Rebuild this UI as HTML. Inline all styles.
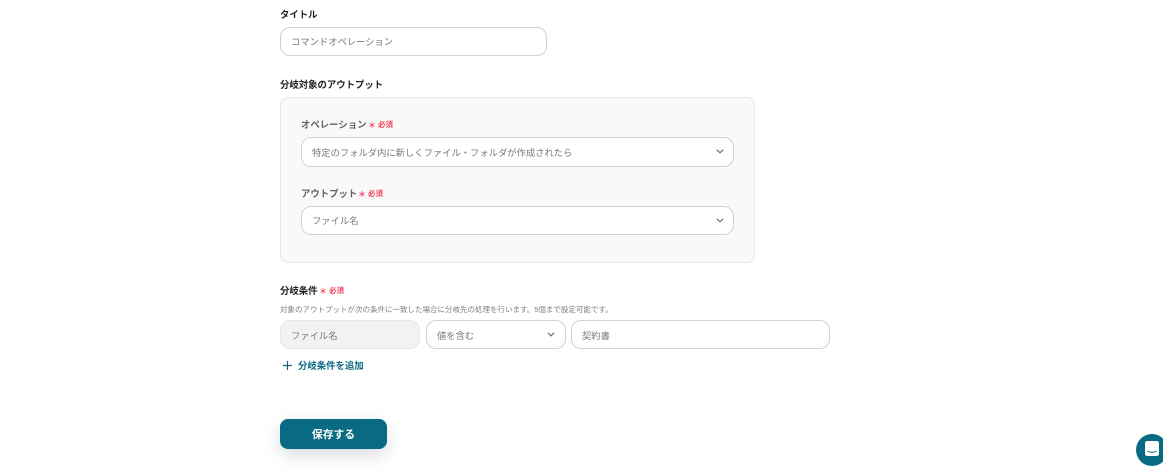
<!DOCTYPE html>
<html lang="ja">
<head>
<meta charset="utf-8">
<style>
html,body{margin:0;padding:0;width:1163px;height:473px;overflow:hidden;background:#fff;}
body{position:relative;font-family:"Liberation Sans","Noto Sans CJK JP",sans-serif;}
.a{position:absolute;box-sizing:border-box;white-space:nowrap;}
.lbl{font-size:9.4px;font-weight:700;line-height:14px;color:#27292d;}
.lbl2{color:#5f6368;}
.req{font-size:7.5px;font-weight:700;line-height:12px;color:#f5405c;}
.ast{font-size:8px;font-weight:700;line-height:12px;color:#f5405c;}
.box{background:#fff;border:1px solid #ccd2d9;border-radius:10px;font-size:9.3px;color:#74787d;padding-left:10px;}
svg.ch{position:absolute;width:8px;height:5px;}
</style>
</head>
<body>
<div class="a lbl" style="left:280px;top:8px;color:#1f2124">タイトル</div>
<div class="a box" style="left:280px;top:27px;width:267px;height:29px;line-height:29px;">コマンドオペレーション</div>

<div class="a lbl" style="left:280px;top:78px;color:#1f2124">分岐対象のアウトプット</div>
<div class="a" style="left:280px;top:97px;width:475px;height:166px;background:#f9f9f9;border:1px solid #e6e7ea;border-radius:8px;"></div>

<div class="a lbl lbl2" style="left:301px;top:118px;">オペレーション</div>
<div class="a ast" style="left:368px;top:120px;">＊</div>
<div class="a req" style="left:378px;top:119px;">必須</div>
<div class="a box" style="left:301px;top:137px;width:433px;height:30px;line-height:30px;">特定のフォルダ内に新しくファイル・フォルダが作成されたら</div>
<svg class="ch" style="left:716px;top:149px;" viewBox="0 0 8 5"><path d="M.8 .8L4 3.8L7.2 .8" fill="none" stroke="#6b6f75" stroke-width="1.2"/></svg>

<div class="a lbl lbl2" style="left:301px;top:187px;">アウトプット</div>
<div class="a ast" style="left:358px;top:189px;">＊</div>
<div class="a req" style="left:368px;top:188px;">必須</div>
<div class="a box" style="left:301px;top:206px;width:433px;height:29px;line-height:29px;">ファイル名</div>
<svg class="ch" style="left:716px;top:218px;" viewBox="0 0 8 5"><path d="M.8 .8L4 3.8L7.2 .8" fill="none" stroke="#6b6f75" stroke-width="1.2"/></svg>

<div class="a lbl" style="left:280px;top:284px;color:#1f2124">分岐条件</div>
<div class="a ast" style="left:319px;top:286px;">＊</div>
<div class="a req" style="left:329px;top:285px;">必須</div>
<div class="a" style="left:280px;top:304px;font-size:7.5px;line-height:12px;color:#7c8086;">対象のアウトプットが次の条件に一致した場合に分岐先の処理を行います。5個まで設定可能です。</div>

<div class="a box" style="left:280px;top:320px;width:140px;height:29px;line-height:30px;background:#f2f2f2;border-color:#e6e7e9;">ファイル名</div>
<div class="a box" style="left:426px;top:320px;width:140px;height:29px;line-height:30px;">値を含む</div>
<svg class="ch" style="left:547px;top:332px;" viewBox="0 0 8 5"><path d="M.8 .8L4 3.8L7.2 .8" fill="none" stroke="#6b6f75" stroke-width="1.2"/></svg>
<div class="a box" style="left:571px;top:320px;width:259px;height:29px;line-height:30px;">契約書</div>

<svg class="a" style="left:283px;top:361px;" width="9" height="9" viewBox="0 0 9 9"><path d="M4.5 0V9M0 4.5H9" stroke="#1d5f73" stroke-width="1.2" fill="none"/></svg>
<div class="a" style="left:298px;top:359px;font-size:9.4px;font-weight:700;line-height:14px;color:#0d6a85;">分岐条件を追加</div>

<div class="a" style="left:280px;top:419px;width:107px;height:30px;background:#086a83;border-radius:8px;box-shadow:0 6px 16px rgba(60,80,100,.2);color:#fff;font-size:10.8px;font-weight:700;line-height:32px;text-align:center;">保存する</div>

<div class="a" style="left:1136px;top:434px;width:32px;height:32px;background:#086a83;border-radius:50%;"></div>
<svg class="a" style="left:1145px;top:441px;" width="14" height="15" viewBox="0 0 14 15"><rect x="0" y="0" width="14" height="15" rx="2.2" fill="#fff"/><path d="M2.5 10C5 11.8 9 11.8 11.5 10" fill="none" stroke="#086a83" stroke-width="1"/></svg>
</body>
</html>
